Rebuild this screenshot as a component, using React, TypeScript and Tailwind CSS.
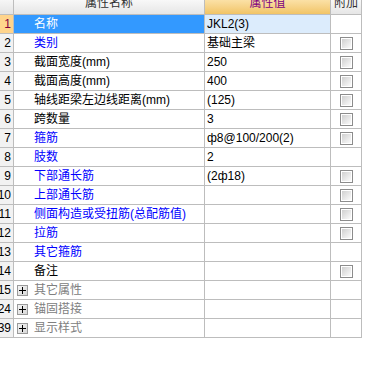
import React from 'react';

interface Row {
    no: string;
    name: string;
    value?: string;
    tone: 'blue' | 'black' | 'group';
    check?: boolean;
}

const rows: Row[] = [
    { no: '1', name: '名称', value: 'JKL2(3)', tone: 'blue' },
    { no: '2', name: '类别', value: '基础主梁', tone: 'blue', check: true },
    { no: '3', name: '截面宽度(mm)', value: '250', tone: 'black', check: true },
    { no: '4', name: '截面高度(mm)', value: '400', tone: 'black', check: true },
    { no: '5', name: '轴线距梁左边线距离(mm)', value: '(125)', tone: 'black', check: true },
    { no: '6', name: '跨数量', value: '3', tone: 'black', check: true },
    { no: '7', name: '箍筋', value: 'ф8@100/200(2)', tone: 'blue', check: true },
    { no: '8', name: '肢数', value: '2', tone: 'blue' },
    { no: '9', name: '下部通长筋', value: '(2ф18)', tone: 'blue', check: true },
    { no: '10', name: '上部通长筋', tone: 'blue', check: true },
    { no: '11', name: '侧面构造或受扭筋(总配筋值)', tone: 'blue', check: true },
    { no: '12', name: '拉筋', tone: 'blue', check: true },
    { no: '13', name: '其它箍筋', tone: 'blue' },
    { no: '14', name: '备注', tone: 'black', check: true },
    { no: '15', name: '其它属性', tone: 'group' },
    { no: '24', name: '锚固搭接', tone: 'group' },
    { no: '39', name: '显示样式', tone: 'group' },
];

function CheckBox() {
    return (
        <div className="w-[13px] h-[13px] border border-[#8c8c8c] bg-white p-[1px]">
            <div className="w-full h-full bg-gradient-to-br from-[#d0d0d0] to-[#fbfbfb]" />
        </div>
    );
}

function PlusBox() {
    return (
        <div className="w-[11px] h-[11px] border border-[#9a9a9a] bg-gradient-to-br from-[#f4f4f4] to-[#d8d8d8] relative flex items-center justify-center">
            <div className="absolute w-[7px] h-[1px] bg-black" />
            <div className="absolute w-[1px] h-[7px] bg-black" />
        </div>
    );
}

export default function App() {
    return (
        <div
            className="w-[365px] h-[365px] bg-white overflow-hidden text-[12px] text-black"
            style={{ fontFamily: '"Liberation Sans", "Noto Sans CJK SC", sans-serif' }}
        >
            {/* Header */}
            <div className="flex h-[15px] border-b border-[#bdbdbd] w-[362px] overflow-hidden">
                <div className="w-[14px] shrink-0 border-r border-[#bdbdbd] bg-gradient-to-b from-[#f6f6f6] to-[#e4e4e4]" />
                <div className="w-[191px] shrink-0 border-r border-[#bdbdbd] bg-gradient-to-b from-[#f8f8f8] to-[#e6e6e6] flex justify-center">
                    <span className="leading-[16px] -mt-[5px] text-[#303030]">属性名称</span>
                </div>
                <div className="w-[126px] shrink-0 border-r border-[#bdbdbd] bg-gradient-to-b from-[#fbe1a6] to-[#f1c465] flex justify-center">
                    <span className="leading-[16px] -mt-[5px] text-[#800080]">属性值</span>
                </div>
                <div className="w-[31px] shrink-0 border-r border-[#bdbdbd] bg-gradient-to-b from-[#f8f8f8] to-[#e6e6e6] flex justify-center">
                    <span className="leading-[16px] -mt-[5px] text-[#303030]">附加</span>
                </div>
            </div>

            {/* Rows */}
            {rows.map((r, i) => {
                const selected = i === 0;
                return (
                    <div key={r.no} className="flex h-[19px] border-b border-[#bdbdbd] w-[362px]">
                        <div
                            className={`w-[14px] shrink-0 border-r border-[#bdbdbd] flex items-center justify-end pr-[2px] overflow-hidden ${
                                selected ? 'bg-[#ffd48c] text-[#800040]' : 'bg-[#f2f2f2] text-black'
                            }`}
                        >
                            <span className="leading-none">{r.no}</span>
                        </div>
                        <div
                            className={`w-[191px] shrink-0 border-r border-[#bdbdbd] flex items-center whitespace-nowrap overflow-hidden ${
                                selected ? 'bg-[#3399ff] text-white' : ''
                            } ${r.tone === 'group' ? 'pl-[3px]' : 'pl-[20px]'}`}
                        >
                            {r.tone === 'group' && (
                                <div className="mr-[6px]">
                                    <PlusBox />
                                </div>
                            )}
                            <span
                                className={
                                    selected
                                        ? 'text-white'
                                        : r.tone === 'blue'
                                        ? 'text-[#0000ff]'
                                        : r.tone === 'group'
                                        ? 'text-[#808080]'
                                        : 'text-black'
                                }
                            >
                                {r.name}
                            </span>
                        </div>
                        <div
                            className={`w-[126px] shrink-0 border-r border-[#bdbdbd] flex items-center pl-[2px] whitespace-nowrap overflow-hidden ${
                                selected ? 'bg-[#dcecfc]' : ''
                            }`}
                        >
                            {r.value}
                        </div>
                        <div className="w-[31px] shrink-0 border-r border-[#bdbdbd] flex items-center justify-center">
                            {r.check && <CheckBox />}
                        </div>
                    </div>
                );
            })}
        </div>
    );
}
